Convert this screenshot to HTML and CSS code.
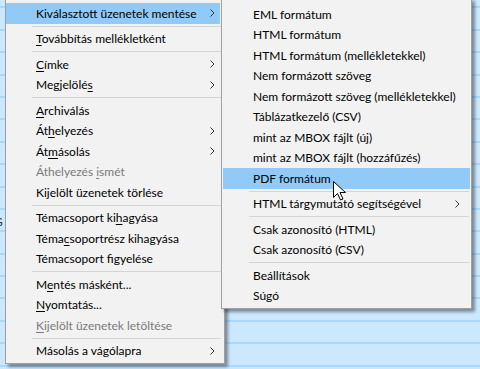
FILE: index.html
```html
<!DOCTYPE html>
<html>
	<head>
		<meta charset="UTF-8">
		<link rel="stylesheet" href="styles.css">
	</head>
	<body>

		<div class="threadList">
			<div class="row"></div>
			<div class="row"></div>
			<div class="row"></div>
			<div class="row"></div>
			<div class="row"></div>
			<div class="row"></div>
			<div class="row"></div>
			<div class="row"></div>
			<div class="row"></div>
			<div class="row"></div>
			<div class="row">G</div>
			<div class="row"></div>
			<div class="row"></div>
			<div class="row"></div>
			<div class="row"></div>
			<div class="row"></div>
			<div class="row"></div>
		</div>

		<div class="menu mainMenu">
			<div class="item active"><span>Kiválasztott üzenetek mentése</span><svg class="arrow" width="5" height="8" viewBox="0 0 5 8"><path d="M0.5 0.5 L4 4 L0.5 7.5" /></svg></div>
			<div class="sep"></div>
			<div class="item"><span><u>T</u>ovábbítás mellékletként</span></div>
			<div class="sep"></div>
			<div class="item"><span><u>C</u>ímke</span><svg class="arrow" width="5" height="8" viewBox="0 0 5 8"><path d="M0.5 0.5 L4 4 L0.5 7.5" /></svg></div>
			<div class="item"><span>Megjelölé<u>s</u></span><svg class="arrow" width="5" height="8" viewBox="0 0 5 8"><path d="M0.5 0.5 L4 4 L0.5 7.5" /></svg></div>
			<div class="sep"></div>
			<div class="item"><span><u>A</u>rchiválás</span></div>
			<div class="item"><span>Át<u>h</u>elyezés</span><svg class="arrow" width="5" height="8" viewBox="0 0 5 8"><path d="M0.5 0.5 L4 4 L0.5 7.5" /></svg></div>
			<div class="item"><span>Át<u>m</u>ásolás</span><svg class="arrow" width="5" height="8" viewBox="0 0 5 8"><path d="M0.5 0.5 L4 4 L0.5 7.5" /></svg></div>
			<div class="item disabled"><span>Áthelyezés <u>i</u>smét</span></div>
			<div class="item"><span>Kijelölt üzenetek törlése</span></div>
			<div class="sep"></div>
			<div class="item"><span>Témacsoport ki<u>h</u>agyása</span></div>
			<div class="item"><span>Téma<u>c</u>soportrész kihagyása</span></div>
			<div class="item"><span>Témacsoport figyelése</span></div>
			<div class="sep"></div>
			<div class="item"><span>M<u>e</u>ntés másként...</span></div>
			<div class="item"><span><u>N</u>yomtatás...</span></div>
			<div class="item disabled"><span><u>K</u>ijelölt üzenetek letöltése</span></div>
			<div class="sep"></div>
			<div class="item"><span>Másolás a vágólapra</span><svg class="arrow" width="5" height="8" viewBox="0 0 5 8"><path d="M0.5 0.5 L4 4 L0.5 7.5" /></svg></div>
		</div>

		<div class="menu subMenu">
			<div class="item">EML formátum</div>
			<div class="item">HTML formátum</div>
			<div class="item">HTML formátum (mellékletekkel)</div>
			<div class="item">Nem formázott szöveg</div>
			<div class="item">Nem formázott szöveg (mellékletekkel)</div>
			<div class="item">Táblázatkezelő (CSV)</div>
			<div class="item">mint az MBOX fájlt (új)</div>
			<div class="item">mint az MBOX fájlt (hozzáfűzés)</div>
			<div class="item active">PDF formátum</div>
			<div class="sep"></div>
			<div class="item"><span>HTML tárgymutató segítségével</span><svg class="arrow" width="5" height="8" viewBox="0 0 5 8"><path d="M0.5 0.5 L4 4 L0.5 7.5" /></svg></div>
			<div class="sep"></div>
			<div class="item">Csak azonosító (HTML)</div>
			<div class="item">Csak azonosító (CSV)</div>
			<div class="sep"></div>
			<div class="item">Beállítások</div>
			<div class="item">Súgó</div>
		</div>

		<svg class="cursor" width="14" height="21" viewBox="0 0 14 21">
			<path d="M0.5 0.5 L0.5 16.5 L4.5 12.5 L7.5 19 L10 18 L7 11.5 L12.5 11.5 Z" />
		</svg>

	</body>
</html>
```

FILE: styles.css
```css
body {
	margin: 0;
	height: 369px;
	overflow: hidden;
	background-color: #cce8ff;
	font-family: 'Lato', sans-serif;
	font-size: 12px;
	color: #000;
}

/* message list behind the menus */

.threadList {
	margin-top: -14px;
}

.row {
	height: 20.4px;
	border-bottom: 2px solid #aad8fd;
	padding-left: 0;
	text-indent: -6px;
	line-height: 24px;
	color: #333;
	overflow: hidden;
}

/* popup menus */

.menu {
	position: absolute;
	background-color: #f2f2f2;
	border: 1px solid #a0a0a0;
	box-shadow: 3px 3px 3px rgba(0,0,0,0.4);
	padding-bottom: 2px;
	padding-top: 5px;
}

.mainMenu {
	left: 5px;
	top: -3px;
	width: 218px;
}

.subMenu {
	left: 221px;
	top: -2px;
	width: 249px;
}

.item {
	display: flex;
	align-items: center;
	height: 20.5px;
	padding-left: 30px;
	white-space: nowrap;
}

.mainMenu .item {
	margin-right: 4px;
}

.subMenu .item {
	margin: 0 1px;
}

.item.active {
	background-color: #91c9f7;
}

.item.disabled {
	color: #7a7a7a;
}

.item u {
	text-underline-offset: 2px;
}

.arrow {
	margin-left: auto;
	fill: none;
	stroke: #333;
	stroke-width: 1;
}

.mainMenu .arrow {
	margin-right: 5px;
}

.subMenu .arrow {
	margin-right: 10px;
}

.sep {
	height: 1px;
	background-color: #d4d4d4;
	margin-top: 2px;
	margin-bottom: 2px;
}

.mainMenu .sep {
	margin-left: 26px;
	margin-right: 3px;
}

.subMenu .sep {
	margin-left: 27px;
	margin-right: 2px;
}

.cursor {
	position: absolute;
	left: 333px;
	top: 181px;
	fill: #fff;
	stroke: #000;
	stroke-width: 1;
}
```
